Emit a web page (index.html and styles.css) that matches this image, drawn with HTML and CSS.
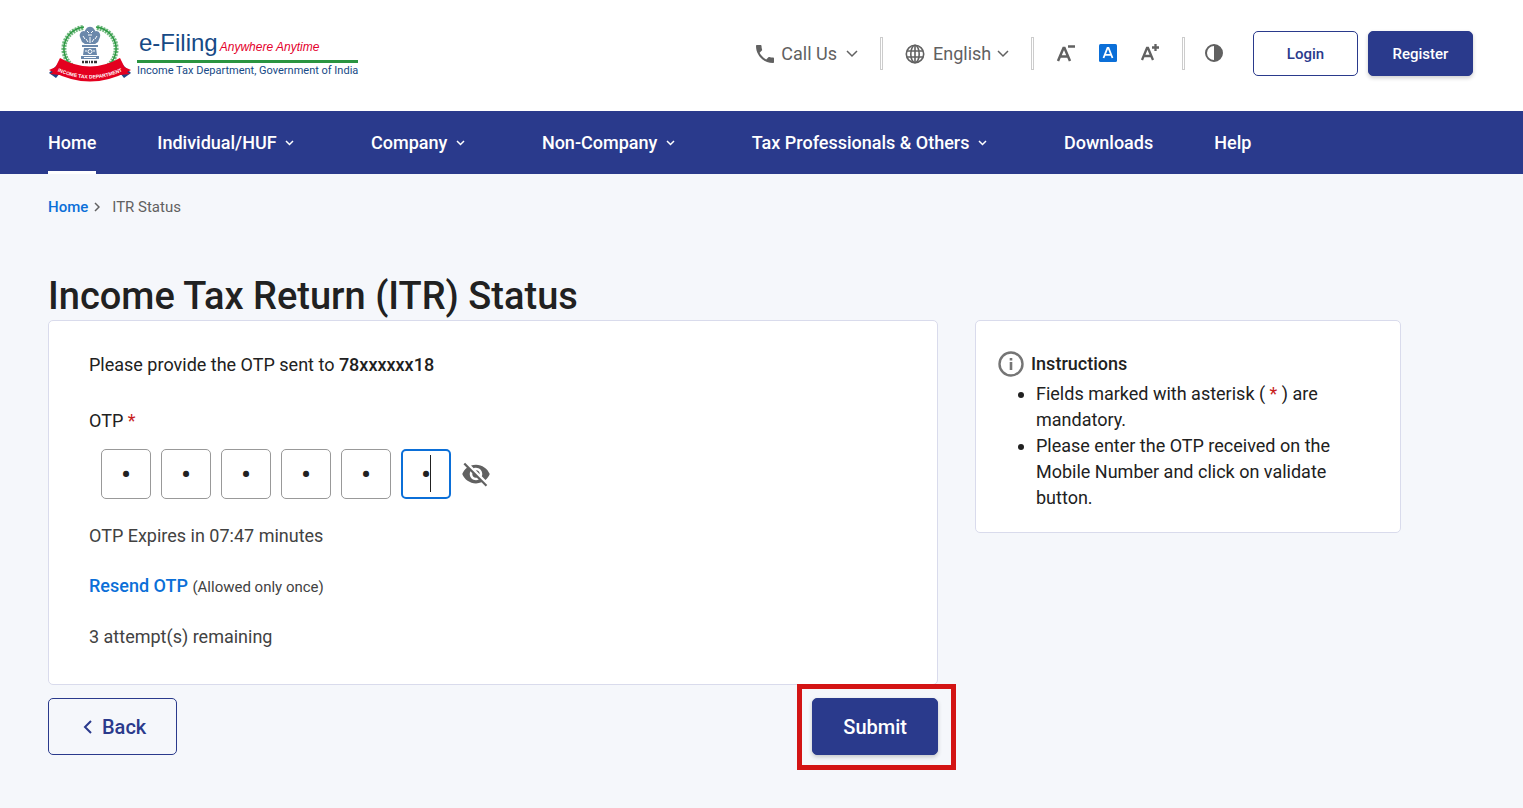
FILE: index.html
```html
<!DOCTYPE html>
<html lang="en">

<head>
    <meta charset="UTF-8">
    <meta name="viewport" content="width=device-width, initial-scale=1.0">
    <title>ITR Status</title>
    <link rel="stylesheet" href="styles.css">
</head>

<body>
    <header class="header flex-between">
        <a class="logo" href="#">
            <svg class="emblem" viewBox="0 0 84 62" aria-hidden="true">
                <!-- wreath -->
                <g fill="none" stroke="#2f9a45">
                    <path d="M36 4C22 6 15 17 16 28c1 9 7 16 14 18M48 4c14 2 21 13 20 24c-1 9-7 16-14 18" stroke-width="1.5" />
                    <path d="M35 4.500C22 7 15 17 16 28c1 9 7 16 14 18" stroke-width="5" stroke-dasharray="2 1" opacity=".7" />
                    <path d="M49 4.500c13 2.500 20 12.500 19 23.500c-1 9-7 16-14 18" stroke-width="5" stroke-dasharray="2 1" opacity=".7" />
                </g>
                <!-- lion capital -->
                <g fill="#6b88ab">
                    <path d="M38 6c2-3 6-3 8 0l2 3-1 4 2 4-2 4H37l-2-4 2-4-1-4z" />
                    <path d="M36 8c-3 0-5 3-4 6l2 5 3 2V9zM48 8c3 0 5 3 4 6l-2 5-3 2V9z" />
                    <path d="M34 22h16v2H34zM36 25h12l1 7H35zM33 33h18v3H33z" />
                </g>
                <g fill="none" stroke="#fff" stroke-width="1">
                    <path d="M39 8l2 2M45 8l-2 2M40 12h4M38 16l2 3M46 16l-2 3M42 14v6M35 13l2 3M49 13l-2 3" />
                    <circle cx="42" cy="28.500" r="2" />
                    <path d="M37 28h2M45 28h2M36 34.500h12" />
                </g>
                <path d="M34 39h16" stroke="#333" stroke-width="2.500" stroke-dasharray="2 1 3 1 1 1" />
                <!-- ribbon -->
                <path d="M1 50l8-8 3 8-4 5zM83 50l-8-8-3 8 4 5z" fill="#1f4583" />
                <path d="M1 47l9-4 2 9-10-1 3-2zM83 47l-9-4-2 9 10-1-3-2z" fill="#e4001f" />
                <path d="M12 35q30 17 60 0l7 14q-37 19-74 0z" fill="#e4001f" />
                <path id="ribbon" d="M5 46q37 19 74 0" fill="none" />
                <text class="ribbon-text" text-anchor="middle"><textPath href="#ribbon" startOffset="50%">INCOME TAX DEPARTMENT</textPath></text>
            </svg>
            <span class="logo-text">
                <span class="logo-top">
                    <span class="logo-name">e-Filing</span>
                    <em class="logo-slogan">Anywhere Anytime</em>
                </span>
                <span class="logo-dept">Income Tax Department, Government of India</span>
            </span>
        </a>

        <div class="tools flex">
            <button class="tool call flex" type="button">
                <svg width="24" height="24" viewBox="0 0 24 24"><path fill="currentColor" d="M6.620 10.790c1.440 2.830 3.760 5.140 6.590 6.590l2.200-2.200c.270-.270.670-.360 1.020-.240 1.120.370 2.330.570 3.570.570.550 0 1 .450 1 1V20c0 .550-.450 1-1 1C10.610 21 3 13.390 3 4c0-.550.450-1 1-1h3.500c.550 0 1 .450 1 1 0 1.250.200 2.450.570 3.570.110.350.030.740-.250 1.020l-2.200 2.200z" /></svg>
                <span>Call Us</span>
                <svg class="arrow" width="12" height="8" viewBox="0 0 12 8"><path d="M1 1l5 5 5-5" /></svg>
            </button>
            <span class="divider"></span>
            <div class="tool language flex">
                <svg width="20" height="20" viewBox="0 0 20 20" fill="none" stroke="currentColor" stroke-width="1.600"><circle cx="10" cy="10" r="8.700" /><ellipse cx="10" cy="10" rx="4.200" ry="8.700" /><path d="M10 1v18M2 7h16M2 13h16" /></svg>
                <select class="language-select" aria-label="Language">
                    <option>English</option>
                </select>
                <svg class="arrow" width="12" height="8" viewBox="0 0 12 8"><path d="M1 1l5 5 5-5" /></svg>
            </div>
            <span class="divider"></span>
            <div class="sizes flex">
                <button class="tool" type="button" aria-label="Decrease text size">
                    <svg width="20" height="20" viewBox="0 0 20 20" fill="none" stroke="currentColor" stroke-width="2.500"><path d="M2 17L7.500 4h1L14 17M4.500 12.500h7M12 2.500h7" /></svg>
                </button>
                <button class="tool" type="button" aria-label="Default text size">
                    <svg width="20" height="20" viewBox="0 0 20 20"><rect x="1" width="18" height="18" rx="1.500" fill="#0b6fd8" /><path d="M5.500 14L9.500 4h1l4 10M7 10.800h6" fill="none" stroke="#fff" stroke-width="1.800" /></svg>
                </button>
                <button class="tool" type="button" aria-label="Increase text size">
                    <svg width="20" height="20" viewBox="0 0 20 20" fill="none" stroke="currentColor" stroke-width="2.300"><path d="M2 16L7 4h1l5 12M4 12h7M12 3.500h7M15.500 0v7" /></svg>
                </button>
            </div>
            <span class="divider"></span>
            <button class="tool contrast" type="button" aria-label="Contrast">
                <svg width="20" height="20" viewBox="0 0 20 20"><circle cx="10" cy="9" r="8" fill="none" stroke="currentColor" stroke-width="2" /><path d="M10 1a8 8 0 0 1 0 16z" fill="currentColor" /></svg>
            </button>
            <button class="btn btn-small btn-outline" type="button">Login</button>
            <button class="btn btn-small btn-primary" type="button">Register</button>
        </div>
    </header>

    <nav class="nav flex">
        <a class="nav-link active" href="#">Home</a>
        <button class="nav-link menu" type="button">Individual/HUF <svg class="arrow" width="9" height="6" viewBox="0 0 9 6"><path d="M1 1l3.500 3.500L8 1" /></svg></button>
        <button class="nav-link menu" type="button">Company <svg class="arrow" width="9" height="6" viewBox="0 0 9 6"><path d="M1 1l3.500 3.500L8 1" /></svg></button>
        <button class="nav-link menu" type="button">Non-Company <svg class="arrow" width="9" height="6" viewBox="0 0 9 6"><path d="M1 1l3.500 3.500L8 1" /></svg></button>
        <button class="nav-link menu" type="button">Tax Professionals &amp; Others <svg class="arrow" width="9" height="6" viewBox="0 0 9 6"><path d="M1 1l3.500 3.500L8 1" /></svg></button>
        <a class="nav-link" href="#">Downloads</a>
        <a class="nav-link" href="#">Help</a>
    </nav>

    <main class="page">
        <div class="breadcrumb flex">
            <a class="link" href="#">Home</a>
            <svg class="arrow" width="6" height="10" viewBox="0 0 6 10"><path d="M1 1l4 4-4 4" /></svg>
            <span>ITR Status</span>
        </div>

        <h1>Income Tax Return (ITR) Status</h1>

        <div class="columns">
            <form class="otp-form">
                <section class="card otp-card">
                    <p>Please provide the OTP sent to <strong>78xxxxxx18</strong></p>
                    <p class="otp-label" id="otp-label">OTP <span class="required">*</span></p>
                    <div class="otp flex" role="group" aria-labelledby="otp-label">
                        <input type="password" maxlength="1" value="1" aria-label="OTP digit 1">
                        <input type="password" maxlength="1" value="1" aria-label="OTP digit 2">
                        <input type="password" maxlength="1" value="1" aria-label="OTP digit 3">
                        <input type="password" maxlength="1" value="1" aria-label="OTP digit 4">
                        <input type="password" maxlength="1" value="1" aria-label="OTP digit 5">
                        <span class="otp-current">
                            <input type="password" maxlength="1" value="1" aria-label="OTP digit 6">
                        </span>
                        <button class="tool eye" type="button" aria-label="Show OTP">
                            <svg width="30" height="30" viewBox="0 0 24 24"><path fill="currentColor" d="M12 7c2.760 0 5 2.240 5 5 0 .650-.130 1.260-.360 1.830l2.920 2.920c1.510-1.260 2.700-2.890 3.430-4.750-1.730-4.390-6-7.500-11-7.500-1.400 0-2.740.250-3.980.700l2.160 2.160C10.740 7.130 11.350 7 12 7zM2 4.270l2.280 2.280.460.460C3.080 8.300 1.780 10.020 1 12c1.730 4.390 6 7.500 11 7.500 1.550 0 3.030-.300 4.380-.840l.420.420L19.730 22 21 20.730 3.270 3 2 4.270zM7.530 9.800l1.550 1.550c-.050.210-.080.430-.080.650 0 1.660 1.340 3 3 3 .220 0 .440-.030.650-.080l1.550 1.550c-.670.330-1.410.530-2.200.530-2.760 0-5-2.240-5-5 0-.790.200-1.530.530-2.200zm4.310-.780l3.150 3.150.020-.160c0-1.660-1.340-3-3-3l-.170.010z" /></svg>
                        </button>
                    </div>
                    <p class="note">OTP Expires in 07:47 minutes</p>
                    <p class="note"><a class="link" href="#">Resend OTP</a> <small>(Allowed only once)</small></p>
                    <p class="note">3 attempt(s) remaining</p>
                </section>
                <div class="actions flex-between">
                    <button class="btn btn-large btn-outline" type="button">
                        <svg class="arrow" width="10" height="14" viewBox="0 0 10 14"><path d="M8 1L2 7l6 6" /></svg>
                        Back
                    </button>
                    <div class="highlight">
                        <button class="btn btn-large btn-primary" type="submit">Submit</button>
                    </div>
                </div>
            </form>

            <aside class="card instructions">
                <h2 class="flex">
                    <svg width="26" height="26" viewBox="0 0 26 26"><circle cx="13" cy="13" r="11.500" fill="none" stroke="#757575" stroke-width="2.400" /><path d="M13 11v8M13 7v2.600" stroke="#757575" stroke-width="2.600" /></svg>
                    Instructions
                </h2>
                <ul>
                    <li>Fields marked with asterisk ( <span class="required">*</span> ) are mandatory.</li>
                    <li>Please enter the OTP received on the Mobile Number and click on validate button.</li>
                </ul>
            </aside>
        </div>
    </main>
</body>

</html>
```
FILE: styles.css
```css
* {
    padding: 0;
    margin: 0;
    box-sizing: border-box;
}

body {
    font-family: Roboto, "Liberation Sans", sans-serif;
    font-size: 18px;
    line-height: 26px;
    color: #212121;
    background-color: #f5f7fb;
}

button,
input,
select {
    font: inherit;
    color: inherit;
    border: none;
    background: none;
}

button {
    cursor: pointer;
}

a {
    text-decoration: none;
}

.flex {
    display: flex;
    align-items: center;
}

.flex-between {
    display: flex;
    justify-content: space-between;
    align-items: center;
}

.arrow {
    flex: none;
    fill: none;
    stroke: currentColor;
    stroke-width: 1.5px;
}

.link {
    color: #0b6fd8;
    font-weight: 500;
}

.required {
    color: #c81e1e;
}

/* header */
.header {
    height: 111px;
    padding: 0 50px 4px 48px;
    background-color: white;
}

.logo {
    display: flex;
    align-items: center;
    gap: 5px;
}

.emblem {
    width: 84px;
    height: 62px;
}

.ribbon-text {
    font: bold 5px "Liberation Sans", sans-serif;
    fill: white;
}

.logo-text {
    display: flex;
    flex-direction: column;
    color: #174a86;
    white-space: nowrap;
}

.logo-top {
    display: flex;
    align-items: baseline;
    gap: 2px;
    padding: 2px 0 0 2px;
    border-bottom: 3px solid #2a9440;
    font-family: "Liberation Sans", sans-serif;
}

.logo-name {
    font-size: 24px;
}

.logo-slogan {
    font-size: 12px;
    color: #e4002b;
}

.logo-dept {
    font-size: 11px;
    line-height: 16px;
}

.tools {
    color: #616161;
}

.tool {
    color: #616161;
}

.tool svg {
    display: block;
}

.call {
    gap: 4px;
}

.call .arrow {
    margin-left: 5px;
}

.divider {
    width: 3px;
    height: 33px;
    margin: 0 22px;
    border: 1px solid #ccc;
}

.language {
    gap: 6px;
}

.language-select {
    width: 58px;
    margin-left: 2px;
    appearance: none;
}

.sizes {
    gap: 22px;
}

.contrast {
    margin: 0 29px 0 -3px;
}

.btn {
    border: 1px solid #2a3a8c;
    border-radius: 5px;
    font-weight: 500;
    color: #2a3a8c;
}

.btn-small {
    width: 105px;
    height: 45px;
    font-size: 15px;
}

.btn-small + .btn-small {
    margin-left: 10px;
}

.btn-large {
    height: 57px;
    padding: 0 30px;
    font-size: 20px;
}

.btn-large .arrow {
    margin: 0 4px;
    stroke-width: 2px;
}

.btn-primary {
    color: white;
    background-color: #2a3a8c;
    box-shadow: 0 2px 4px rgba(0, 0, 0, 0.2);
}

/* menu */
.nav {
    height: 63px;
    padding: 0 48px;
    gap: 61px;
    background-color: #2a3a8c;
}

.nav-link {
    height: 63px;
    line-height: 63px;
    font-weight: 500;
    color: white;
    white-space: nowrap;
}

.nav-link.active {
    box-shadow: inset 0 -3px white;
}

.nav-link.menu {
    margin-right: 16px;
}

.nav-link .arrow {
    margin: 0 0 3px 4px;
}

/* page */
.page {
    padding: 20px 122px 40px 48px;
}

.breadcrumb {
    gap: 6px;
    font-size: 15px;
    color: #616161;
}

.breadcrumb span {
    margin-left: 6px;
}

h1 {
    margin-top: 52px;
    font-size: 38px;
    font-weight: 500;
    line-height: 48px;
}

.columns {
    display: grid;
    grid-template-columns: 890fr 426fr;
    gap: 37px;
    align-items: start;
}

.card {
    background-color: white;
    border: 1px solid #d9dbec;
    border-radius: 5px;
}

.otp-card {
    padding: 31px 40px 34px;
}

strong {
    font-weight: 500;
}

.otp-label {
    margin-top: 30px;
}

.otp {
    gap: 10px;
    margin: 15px 12px 24px;
}

.otp input {
    display: block;
    width: 50px;
    height: 50px;
    border: 1px solid #999;
    border-radius: 5px;
    font-size: 30px;
    text-align: center;
    outline: none;
}

.otp-current {
    position: relative;
}

.otp .otp-current input {
    border: 2px solid #0b6fd8;
}

/* text cursor */
.otp-current::after {
    content: "";
    position: absolute;
    top: 6px;
    left: 29px;
    width: 1px;
    height: 37px;
    background-color: #212121;
}

.note {
    color: #424242;
}

.note + .note {
    margin-top: 24px;
}

small {
    font-size: 15px;
}

.actions {
    margin-top: 13px;
}

.highlight {
    position: relative;
}

.highlight::after {
    content: "";
    position: absolute;
    inset: -14px -18px -15px -15px;
    border: 5px solid #d31414;
    pointer-events: none;
}

.instructions {
    padding: 30px 22px 21px;
}

h2 {
    gap: 7px;
    font-size: 18px;
    font-weight: 500;
    line-height: 26px;
}

ul {
    margin-top: 4px;
    padding: 0 30px 0 38px;
}
```
